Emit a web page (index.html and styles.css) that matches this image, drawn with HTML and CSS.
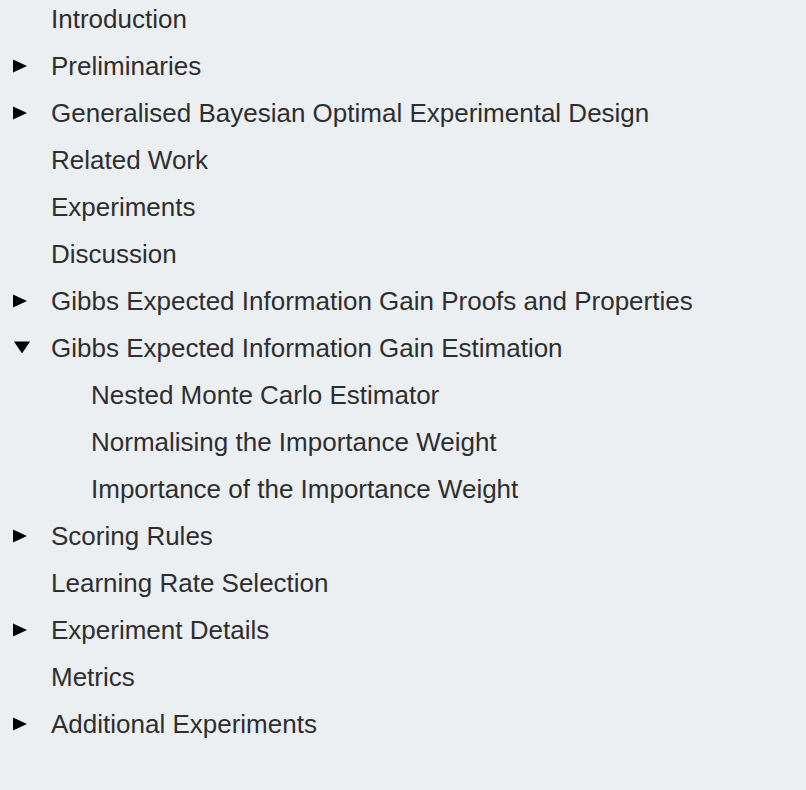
FILE: index.html
```html
<!DOCTYPE html>
<html lang="en">
<head>
<meta charset="utf-8">
<link rel="stylesheet" href="styles.css">
<title>Contents</title>
</head>
<body>
<ul class="toc">
  <li class="row"><span class="mark"></span><span class="label">Introduction</span></li>
  <li class="row"><span class="mark"><svg class="tri" width="14" height="14" viewBox="0 0 14 14"><polygon points="0,0.5 14,7 0,13.5" fill="#000"/></svg></span><span class="label">Preliminaries</span></li>
  <li class="row"><span class="mark"><svg class="tri" width="14" height="14" viewBox="0 0 14 14"><polygon points="0,0.5 14,7 0,13.5" fill="#000"/></svg></span><span class="label">Generalised Bayesian Optimal Experimental Design</span></li>
  <li class="row"><span class="mark"></span><span class="label">Related Work</span></li>
  <li class="row"><span class="mark"></span><span class="label">Experiments</span></li>
  <li class="row"><span class="mark"></span><span class="label">Discussion</span></li>
  <li class="row"><span class="mark"><svg class="tri" width="14" height="14" viewBox="0 0 14 14"><polygon points="0,0.5 14,7 0,13.5" fill="#000"/></svg></span><span class="label">Gibbs Expected Information Gain Proofs and Properties</span></li>
  <li class="row"><span class="mark"><svg class="tri down" width="16" height="13" viewBox="0 0 16 13"><polygon points="0,0.5 16,0.5 8,12.5" fill="#000"/></svg></span><span class="label">Gibbs Expected Information Gain Estimation</span></li>
  <li class="row sub"><span class="label">Nested Monte Carlo Estimator</span></li>
  <li class="row sub"><span class="label">Normalising the Importance Weight</span></li>
  <li class="row sub"><span class="label">Importance of the Importance Weight</span></li>
  <li class="row"><span class="mark"><svg class="tri" width="14" height="14" viewBox="0 0 14 14"><polygon points="0,0.5 14,7 0,13.5" fill="#000"/></svg></span><span class="label">Scoring Rules</span></li>
  <li class="row"><span class="mark"></span><span class="label">Learning Rate Selection</span></li>
  <li class="row"><span class="mark"><svg class="tri" width="14" height="14" viewBox="0 0 14 14"><polygon points="0,0.5 14,7 0,13.5" fill="#000"/></svg></span><span class="label">Experiment Details</span></li>
  <li class="row"><span class="mark"></span><span class="label">Metrics</span></li>
  <li class="row"><span class="mark"><svg class="tri" width="14" height="14" viewBox="0 0 14 14"><polygon points="0,0.5 14,7 0,13.5" fill="#000"/></svg></span><span class="label">Additional Experiments</span></li>
</ul>
</body>
</html>
```

FILE: styles.css
```css
html, body {
  margin: 0;
  padding: 0;
  background: #ebeff2;
}
body {
  font-family: "Liberation Sans", Arial, Helvetica, sans-serif;
  font-size: 26px;
  color: #2e2e2e;
  overflow: hidden;
}
.toc {
  list-style: none;
  margin: -4px 0 0 0;
  padding: 0;
}
.row {
  display: flex;
  align-items: center;
  height: 47px;
  line-height: 47px;
  padding-left: 13px;
  white-space: nowrap;
}
.row.sub {
  padding-left: 91px;
}
.mark {
  width: 38px;
  flex: 0 0 38px;
  display: flex;
  align-items: center;
  height: 47px;
}
.tri {
  display: block;
  flex: none;
  margin-top: -1px;
}
.tri.down {
  margin-left: 1px;
  margin-top: -2px;
}
.label {
  display: block;
}
```
